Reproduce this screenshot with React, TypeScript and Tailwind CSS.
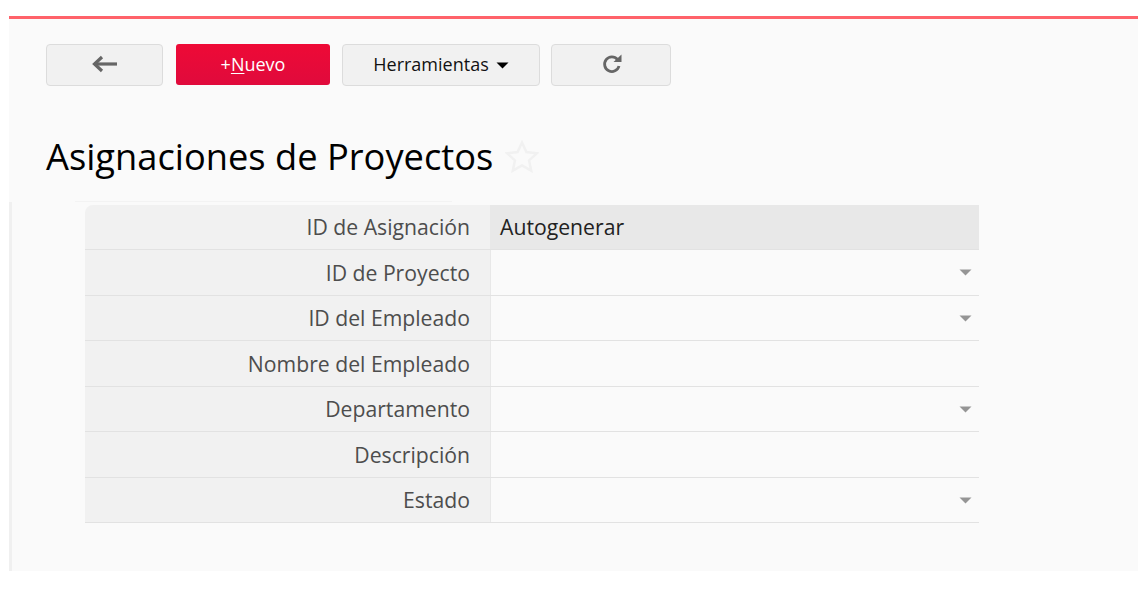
const rows = [
  { label: "ID de Proyecto", caret: true },
  { label: "ID del Empleado", caret: true },
  { label: "Nombre del Empleado", caret: false },
  { label: "Departamento", caret: true },
  { label: "Descripción", caret: false },
  { label: "Estado", caret: true },
];

const toolButton =
  "flex h-[42px] items-center justify-center rounded-[4px] border border-[#dcdcdc] bg-[#f1f1f1]";

function Caret() {
  return (
    <svg width="13" height="7" viewBox="0 0 13 7" className="shrink-0">
      <path d="M0.5 0.5h12L6.5 6.5z" fill="#959595" />
    </svg>
  );
}

export default function App() {
  return (
    <div className="h-[605px] w-[1138px] overflow-hidden bg-white pl-[9px] pt-4 font-['Open_Sans',sans-serif]">
      <div className="h-[555px] w-[1129px] border-t-[3px] border-[#ff626a] bg-[#fafafa]">
        <div className="flex gap-3 pl-[37px] pt-[25px]">
          <button className={`${toolButton} w-[117px] pb-[2px]`}>
            <svg width="28" height="18" viewBox="0 0 28 18" fill="none" stroke="#666" strokeWidth="3.2">
              <path d="M26 9H3" />
              <path d="M11 2 3.5 9l7.5 7" />
            </svg>
          </button>
          <button className="flex h-[41px] w-[154px] ml-px items-center justify-center rounded-[3px] bg-gradient-to-b from-[#ee0a36] to-[#e00a3c] text-[18px] text-white">
            +<span className="underline underline-offset-2">N</span>uevo
          </button>
          <button className={`${toolButton} w-[198px] gap-[7px] pb-[2px] text-[18px] text-[#111]`}>
            Herramientas
            <svg width="13" height="7" viewBox="0 0 13 7" className="mt-[2px]">
              <path d="M0.5 0.5h12L6.5 6.5z" fill="#000" />
            </svg>
          </button>
          <button className={`${toolButton} ml-[-1px] w-[120px] pb-[2px] pl-[2px]`}>
            <svg width="22" height="20" viewBox="0 0 22 20" fill="none">
              <path d="M16.5 5.5A7.3 7.3 0 1 0 18 12" stroke="#666" strokeWidth="2.8" />
              <path d="M12.5 8h8V0.5z" fill="#666" />
            </svg>
          </button>
        </div>

        <div className="mt-[40px] flex items-center pl-[37px]">
          <h1 className="text-[36.25px] font-normal leading-[60px] text-black">Asignaciones de Proyectos</h1>
          <svg width="34" height="33" viewBox="0 0 34 33" className="ml-[12px]" fill="none" stroke="#f1f1f1" strokeWidth="2.5">
            <path d="M17 2.5l4.4 9.6 10.4 1.2-7.7 7.1 2.1 10.3L17 25.4 7.8 30.7l2.1-10.3-7.7-7.1 10.4-1.2z" />
          </svg>
        </div>

        <div className="ml-[66px] mt-[15px] h-px w-[377px] bg-[#f3f3f3]" />

        <div className="h-[369px] border-l-[3px] border-[#f0f0f0] pl-[73px] pt-[3px]">
          <div className="w-[894px] overflow-hidden rounded-tl-[8px] text-[21.2px]">
            <div className="flex h-[45px] border-b border-[#e2e2e2]">
              <div className="flex w-[405px] items-center justify-end bg-[#f1f1f1] pr-5 text-[#4d4d4d]">ID de Asignación</div>
              <div className="flex flex-1 items-center bg-[#e8e8e8] pl-[10px] text-[#222]">Autogenerar</div>
            </div>
            {rows.map((row) => (
              <div key={row.label} className="flex h-[45.5px] border-b border-[#e2e2e2]">
                <div className="flex w-[406px] items-center justify-end border-r border-[#e8e8e8] bg-[#f1f1f1] pr-5 pt-[0.6px] text-[#4d4d4d]">
                  {row.label}
                </div>
                <div className="flex flex-1 items-center justify-end pr-[7px] pt-[1px]">{row.caret && <Caret />}</div>
              </div>
            ))}
          </div>
        </div>
      </div>
    </div>
  );
}
